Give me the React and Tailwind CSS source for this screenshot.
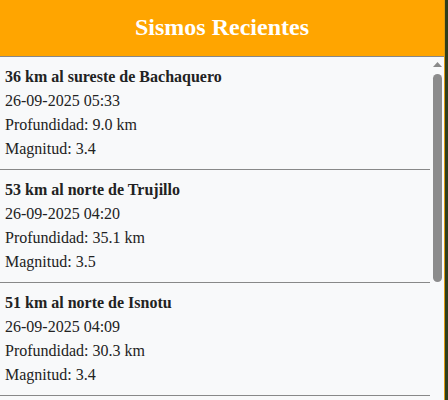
import React from "react";

const items = [
  { t: "36 km al sureste de Bachaquero", d: "26-09-2025 05:33", p: "9.0", m: "3.4" },
  { t: "53 km al norte de Trujillo", d: "26-09-2025 04:20", p: "35.1", m: "3.5" },
  { t: "51 km al norte de Isnotu", d: "26-09-2025 04:09", p: "30.3", m: "3.4" },
];

export default function App() {
  return (
    <div className="w-[448px] h-[400px] bg-[#2e3d1c] overflow-hidden" style={{ fontFamily: '"Liberation Serif", "Times New Roman", serif' }}>
      <div className="w-[445px] h-[400px] flex flex-col border-r border-[#e09a10] bg-[#f8f9fa]">
        <div className="h-[57px] shrink-0 bg-[#ffa500] border-b border-[#888] flex items-center justify-center">
          <h1 className="text-white text-[24px] font-bold leading-none pb-[3px]">Sismos Recientes</h1>
        </div>
        <div className="flex-1 min-h-0 flex">
          <div className="flex-1 overflow-hidden bg-[#f8f9fa] text-[#222] text-[16px] leading-[24px]">
            {items.map((it, i) => (
              <div key={i} className="px-[5px] py-[8px] border-b border-[#888]">
                <div className="font-bold">{it.t}</div>
                <div>{it.d}</div>
                <div>Profundidad: {it.p} km</div>
                <div>Magnitud: {it.m}</div>
              </div>
            ))}
          </div>
          <div className="w-[14px] shrink-0 bg-[#f8f9fa] flex flex-col items-center pt-[5px]">
            <svg width="9" height="5" viewBox="0 0 9 5" className="block">
              <polygon points="4.5,0 9,5 0,5" fill="#8a8a8a" />
            </svg>
            <div className="mt-[7px] w-[9px] h-[208px] rounded-full bg-[#8c8c8c]" />
          </div>
        </div>
      </div>
    </div>
  );
}
